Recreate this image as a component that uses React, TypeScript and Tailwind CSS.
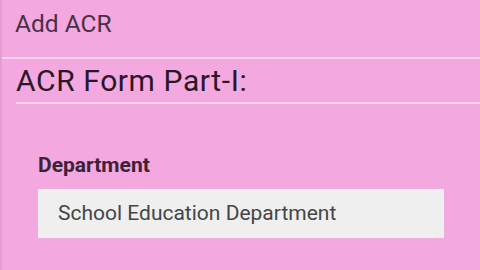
export default function App() {
  return (
    <div className="flex h-[270px] w-[480px] flex-col overflow-hidden border-l-2 border-[#e79ad3] bg-[#f3a8e0] font-['Roboto',sans-serif]">
      <div className="flex h-[57px] shrink-0 items-start pl-[13px] pt-[12px]">
        <span className="text-[24.5px] leading-none text-[#4a3045]">Add ACR</span>
      </div>
      <div className="h-[2px] shrink-0 bg-[#f9d4ef]" />
      <div className="ml-[14px] flex h-[45px] shrink-0 items-center border-b-2 border-[#f9d4ef]">
        <span className="text-[30px] leading-none tracking-[0.6px] text-[#2a1727]">ACR Form Part-I:</span>
      </div>
      <div className="flex flex-col pl-[36px] pt-[51px]">
        <span className="text-[21px] font-bold leading-none text-[#3b2237]">Department</span>
        <div className="mt-[13px] flex h-[49px] w-[406px] shrink-0 items-center bg-[#efefef] pl-[20px] shadow-[0_0_1px_#d9c9d5]">
          <span className="text-[21px] leading-none text-[#454545]">School Education Department</span>
        </div>
        <span className="mt-[30px] shrink-0 text-[21px] font-bold leading-none text-[#3b2237]">Employee</span>
      </div>
    </div>
  )
}
